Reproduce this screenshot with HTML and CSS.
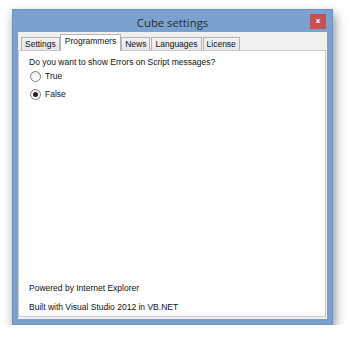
FILE: index.html
```html
<!DOCTYPE html>
<html>
<head>
<meta charset="utf-8">
<link rel="stylesheet" href="styles.css">
</head>
<body>
<div class="window">
  <div class="titlebar">
    <span class="title">Cube settings</span>
    <span class="close">x</span>
  </div>
  <div class="client">
    <div class="tabs">
      <div class="tab">Settings</div>
      <div class="tab active">Programmers</div>
      <div class="tab">News</div>
      <div class="tab">Languages</div>
      <div class="tab">License</div>
    </div>
    <div class="page">
      <div class="question">Do you want to show Errors on Script messages?</div>
      <label class="radio"><span class="dot"></span>True</label>
      <label class="radio checked"><span class="dot"></span>False</label>
      <div class="spacer"></div>
      <div class="foot">Powered by Internet Explorer</div>
      <div class="foot">Built with Visual Studio 2012 in VB.NET</div>
    </div>
  </div>
</div>
</body>
</html>
```
FILE: styles.css
```css
html, body {
  margin: 0;
  padding: 0;
  background: #ffffff;
}
body {
  padding: 9px 0 0 12px;
  font-family: "Liberation Sans", Arial, sans-serif;
  font-size: 8.5px;
  color: #111;
}
.window {
  width: 321px;
  height: 316px;
  box-sizing: border-box;
  background: #7ba2cf;
  border: 1px solid #6d93c0;
  padding: 0 5px 5px 5px;
  display: flex;
  flex-direction: column;
  box-shadow: 2px 5px 10px rgba(0, 0, 0, 0.45);
}
.titlebar {
  height: 22px;
  position: relative;
  display: flex;
  align-items: center;
  justify-content: center;
}
.title {
  font-family: "Open Sans", "Noto Sans", sans-serif;
  font-size: 11.3px;
  color: #2b2b2b;
  margin-top: 2px;
}
.close {
  position: absolute;
  right: 1px;
  top: 4px;
  width: 16px;
  height: 15px;
  background: #c75050;
  color: #fff;
  font-family: "DejaVu Sans", sans-serif;
  font-size: 7px;
  font-weight: bold;
  line-height: 14px;
  text-align: center;
}
.client {
  flex: 1;
  background: #f0f0f0;
  display: flex;
  flex-direction: column;
  padding: 2px 1px 2px 0;
}
.tabs {
  display: flex;
  align-items: flex-end;
  height: 16px;
  padding-left: 3px;
  position: relative;
  z-index: 1;
}
.tab {
  height: 13px;
  box-sizing: border-box;
  border: 1px solid #b4b4b4;
  border-bottom: none;
  background: linear-gradient(#f2f2f2, #e6e6e6);
  padding: 0 3px;
  line-height: 13px;
}
.tab + .tab {
  margin-left: 1px;
}
.tab.active {
  height: 17px;
  margin-bottom: -1px;
  background: #ffffff;
  padding: 0 4px;
  line-height: 12px;
  margin-left: 0;
  margin-right: -1px;
  position: relative;
  z-index: 2;
}
.page {
  flex: 1;
  background: #ffffff;
  border: 1px solid #c9c9c9;
  display: flex;
  flex-direction: column;
  padding: 6px 10px 4px 10px;
}
.question {
  line-height: 10px;
}
.radio {
  display: flex;
  align-items: center;
  height: 14px;
  margin-top: 2px;
}
.radio + .radio {
  margin-top: 4px;
}
.dot {
  width: 11px;
  height: 11px;
  box-sizing: border-box;
  border: 1px solid #7a7a7a;
  border-radius: 50%;
  background: linear-gradient(#ececec, #ffffff);
  margin-right: 4px;
  margin-left: 1px;
  display: flex;
  align-items: center;
  justify-content: center;
}
.radio.checked .dot::after {
  content: "";
  width: 5px;
  height: 5px;
  border-radius: 50%;
  background: #222;
}
.spacer {
  flex: 1;
}
.foot {
  line-height: 10px;
  margin-top: 9px;
}
```
